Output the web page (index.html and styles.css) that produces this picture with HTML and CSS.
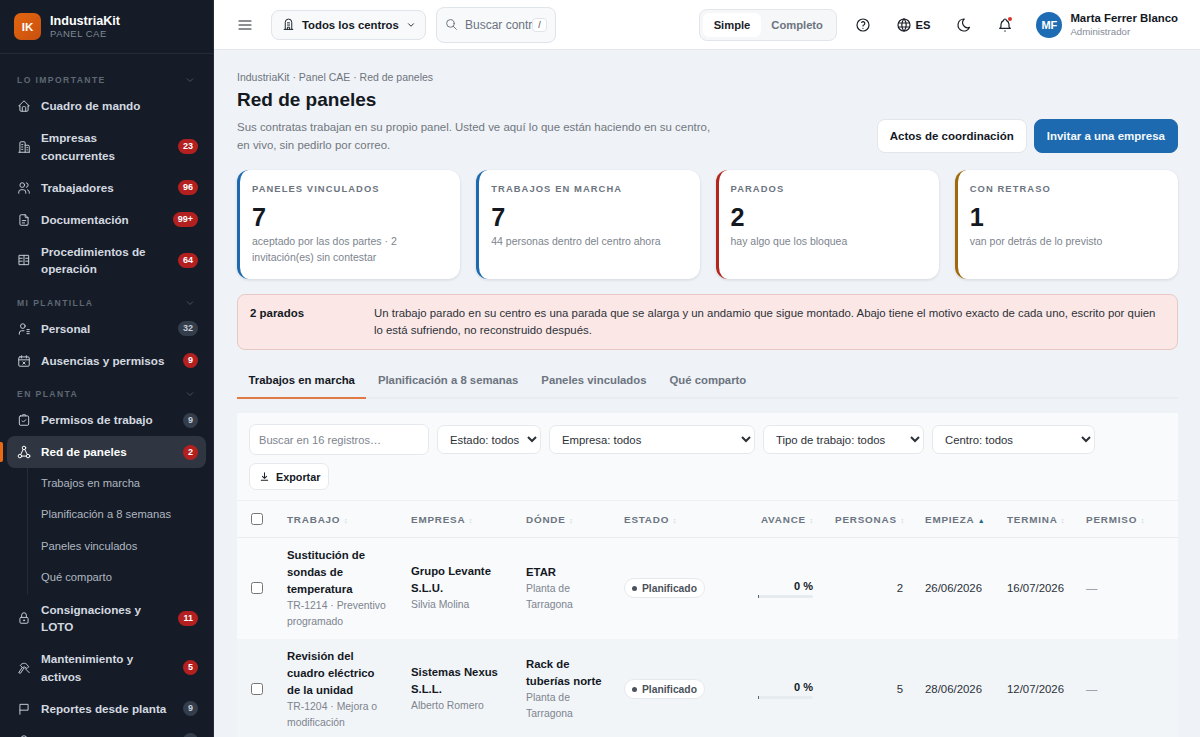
FILE: index.html
```html
<!DOCTYPE html>
<html lang="es">
<head>
    <meta charset="UTF-8">
    <meta name="viewport" content="width=device-width, initial-scale=1.0">
    <title>Red de paneles</title>
    <link rel="stylesheet" href="styles.css">
</head>
<body>
<div class="app">
    <aside class="sidebar">
        <div class="brand">
            <div class="brand-logo">IK</div>
            <div>
                <div class="brand-name">IndustriaKit</div>
                <div class="brand-sub">PANEL CAE</div>
            </div>
        </div>
        <nav class="nav">
            <div class="nav-group first">LO IMPORTANTE <svg class="chev" viewBox="0 0 24 24"><path d="M6 9l6 6 6-6"/></svg></div>
            <a class="nav-item"><svg class="ico" viewBox="0 0 24 24"><path d="M5 12H3l9-9 9 9h-2M5 12v7a2 2 0 0 0 2 2h10a2 2 0 0 0 2-2v-7"/><path d="M9 21v-6a2 2 0 0 1 2-2h2a2 2 0 0 1 2 2v6"/></svg><span class="nav-text">Cuadro de mando</span></a>
            <a class="nav-item"><svg class="ico" viewBox="0 0 24 24"><path d="M3 21h18M5 21V5a2 2 0 0 1 2-2h5a2 2 0 0 1 2 2v16M14 9h5a2 2 0 0 1 2 2v10M8 8h2M8 12h2M8 16h2M17 13h1M17 17h1"/></svg><span class="nav-text">Empresas concurrentes</span><span class="badge red">23</span></a>
            <a class="nav-item"><svg class="ico" viewBox="0 0 24 24"><circle cx="9" cy="7" r="4"/><path d="M3 21v-2a4 4 0 0 1 4-4h4a4 4 0 0 1 4 4v2M16 3.100a4 4 0 0 1 0 7.800M21 21v-2a4 4 0 0 0-3-3.900"/></svg><span class="nav-text">Trabajadores</span><span class="badge red">96</span></a>
            <a class="nav-item"><svg class="ico" viewBox="0 0 24 24"><path d="M14 3v4a1 1 0 0 0 1 1h4"/><path d="M17 21H7a2 2 0 0 1-2-2V5a2 2 0 0 1 2-2h7l5 5v11a2 2 0 0 1-2 2zM9 13h6M9 17h4"/></svg><span class="nav-text">Documentación</span><span class="badge red">99+</span></a>
            <a class="nav-item"><svg class="ico" viewBox="0 0 24 24"><path d="M4 4h16v16H4zM12 4v16M4 9h5M4 14h5M15 9h5M15 14h5"/></svg><span class="nav-text">Procedimientos de operación</span><span class="badge red">64</span></a>

            <div class="nav-group">MI PLANTILLA <svg class="chev" viewBox="0 0 24 24"><path d="M6 9l6 6 6-6"/></svg></div>
            <a class="nav-item"><svg class="ico" viewBox="0 0 24 24"><circle cx="10" cy="7" r="4"/><path d="M4 21v-2a4 4 0 0 1 4-4h4M17 13h4M17 16.500h4M17 20h4"/></svg><span class="nav-text">Personal</span><span class="badge grey">32</span></a>
            <a class="nav-item"><svg class="ico" viewBox="0 0 24 24"><rect x="3" y="5" width="18" height="16" rx="2"/><path d="M8 3v4M16 3v4M3 10h18M10 13.500l4 4M14 13.500l-4 4"/></svg><span class="nav-text">Ausencias y permisos</span><span class="badge red">9</span></a>

            <div class="nav-group">EN PLANTA <svg class="chev" viewBox="0 0 24 24"><path d="M6 9l6 6 6-6"/></svg></div>
            <a class="nav-item"><svg class="ico" viewBox="0 0 24 24"><rect x="4" y="5" width="16" height="16" rx="2"/><path d="M9 5V4a1 1 0 0 1 1-1h4a1 1 0 0 1 1 1v1M9 13.500l2 2 4-4"/></svg><span class="nav-text">Permisos de trabajo</span><span class="badge grey">9</span></a>
            <a class="nav-item active"><svg class="ico" viewBox="0 0 24 24"><circle cx="12" cy="5" r="3"/><circle cx="5" cy="19" r="3"/><circle cx="19" cy="19" r="3"/><path d="M10.600 7.700L6.400 16.300M13.400 7.700l4.200 8.600M8 19h8"/></svg><span class="nav-text">Red de paneles</span><span class="badge red">2</span></a>
            <div class="subnav">
                <a class="sub-item">Trabajos en marcha</a>
                <a class="sub-item">Planificación a 8 semanas</a>
                <a class="sub-item">Paneles vinculados</a>
                <a class="sub-item">Qué comparto</a>
            </div>
            <a class="nav-item"><svg class="ico" viewBox="0 0 24 24"><rect x="5" y="11" width="14" height="10" rx="2"/><circle cx="12" cy="16" r="1"/><path d="M8 11V7a4 4 0 0 1 8 0v4"/></svg><span class="nav-text">Consignaciones y LOTO</span><span class="badge red">11</span></a>
            <a class="nav-item"><svg class="ico" viewBox="0 0 24 24"><path d="M6 7c3-4 8-4 11-1l3 4-3 3-4-3-3 1zM9 11l-6 9 3 1 6-9M14 13l7 7"/></svg><span class="nav-text">Mantenimiento y activos</span><span class="badge red">5</span></a>
            <a class="nav-item"><svg class="ico" viewBox="0 0 24 24"><path d="M5 21V4h14v10H5"/></svg><span class="nav-text">Reportes desde planta</span><span class="badge grey">9</span></a>
            <a class="nav-item"><svg class="ico" viewBox="0 0 24 24"><circle cx="12" cy="8" r="5"/><path d="M12 13v8"/></svg><span class="nav-text">Líneas de vida</span><span class="badge grey">3</span></a>
        </nav>
    </aside>

    <div class="main">
        <header class="topbar">
            <button class="icon-btn menu-btn"><svg class="ico dark" viewBox="0 0 24 24"><path d="M3 6h18M3 12h18M3 18h18"/></svg></button>
            <button class="center-btn">
                <svg class="ico-sm" viewBox="0 0 24 24"><path d="M4 21h16M6 21V8a6 6 0 0 1 12 0v13M10 9h4M10 13h4M10 21v-4h4v4"/></svg>
                Todos los centros
                <svg class="ico-xs" viewBox="0 0 24 24"><path d="M6 9l6 6 6-6"/></svg>
            </button>
            <div class="top-search">
                <svg class="ico-sm grey-ico" viewBox="0 0 24 24"><circle cx="10" cy="10" r="7"/><path d="M21 21l-6-6"/></svg>
                <input class="top-input" type="text" placeholder="Buscar contratas">
                <kbd class="kbd">/</kbd>
            </div>
            <div class="segment">
                <span class="seg on">Simple</span>
                <span class="seg">Completo</span>
            </div>
            <button class="icon-btn help-btn"><svg class="ico dark" viewBox="0 0 24 24"><circle cx="12" cy="12" r="9"/><path d="M12 17v.01M12 13.500a1.500 1.500 0 0 1 1-1.500 2.600 2.600 0 1 0-3-4"/></svg></button>
            <button class="lang-btn"><svg class="ico dark" viewBox="0 0 24 24"><circle cx="12" cy="12" r="9"/><path d="M3.600 9h16.800M3.600 15h16.800M11.500 3a17 17 0 0 0 0 18M12.500 3a17 17 0 0 1 0 18"/></svg>ES</button>
            <button class="icon-btn moon-btn"><svg class="ico dark" viewBox="0 0 24 24"><path d="M12 3h.393a7.500 7.500 0 0 0 7.920 12.446A9 9 0 1 1 12 2.992z"/></svg></button>
            <button class="icon-btn bell-btn">
                <svg class="ico dark" viewBox="0 0 24 24"><path d="M10 5a2 2 0 1 1 4 0 7 7 0 0 1 4 6v3a4 4 0 0 0 2 3H4a4 4 0 0 0 2-3v-3a7 7 0 0 1 4-6M11.500 21h1"/></svg>
                <span class="bell-dot"></span>
            </button>
            <div class="avatar">MF</div>
            <div class="user">
                <div class="user-name">Marta Ferrer Blanco</div>
                <div class="user-role">Administrador</div>
            </div>
        </header>

        <main class="content">
            <div class="crumbs">IndustriaKit · Panel CAE · Red de paneles</div>
            <h1 class="page-title">Red de paneles</h1>
            <div class="page-head">
                <p class="page-desc">Sus contratas trabajan en su propio panel. Usted ve aquí lo que están haciendo en su centro, en vivo, sin pedirlo por correo.</p>
                <div class="page-actions">
                    <button class="btn">Actos de coordinación</button>
                    <button class="btn primary">Invitar a una empresa</button>
                </div>
            </div>

            <section class="cards">
                <div class="card blue">
                    <div class="card-label">PANELES VINCULADOS</div>
                    <div class="card-value">7</div>
                    <div class="card-note">aceptado por las dos partes · 2 invitación(es) sin contestar</div>
                </div>
                <div class="card blue">
                    <div class="card-label">TRABAJOS EN MARCHA</div>
                    <div class="card-value">7</div>
                    <div class="card-note">44 personas dentro del centro ahora</div>
                </div>
                <div class="card red-card">
                    <div class="card-label">PARADOS</div>
                    <div class="card-value">2</div>
                    <div class="card-note">hay algo que los bloquea</div>
                </div>
                <div class="card amber">
                    <div class="card-label">CON RETRASO</div>
                    <div class="card-value">1</div>
                    <div class="card-note">van por detrás de lo previsto</div>
                </div>
            </section>

            <section class="alert">
                <strong class="alert-title">2 parados</strong>
                <p class="alert-text">Un trabajo parado en su centro es una parada que se alarga y un andamio que sigue montado. Abajo tiene el motivo exacto de cada uno, escrito por quien lo está sufriendo, no reconstruido después.</p>
            </section>

            <div class="tabs">
                <a class="tab on">Trabajos en marcha</a>
                <a class="tab">Planificación a 8 semanas</a>
                <a class="tab">Paneles vinculados</a>
                <a class="tab">Qué comparto</a>
            </div>

            <section class="panel">
                <div class="filters">
                    <input class="f-search" type="text" placeholder="Buscar en 16 registros…">
                    <select class="f-select f-estado"><option>Estado: todos</option></select>
                    <select class="f-select f-empresa"><option>Empresa: todos</option></select>
                    <select class="f-select f-tipo"><option>Tipo de trabajo: todos</option></select>
                    <select class="f-select f-centro"><option>Centro: todos</option></select>
                    <button class="export"><svg class="ico-xs" viewBox="0 0 24 24"><path d="M5 20h14M12 4v12M7.500 11.500L12 16l4.500-4.500"/></svg>Exportar</button>
                </div>
                <table class="grid">
                    <colgroup>
                        <col class="c-check"><col class="c-trabajo"><col class="c-empresa"><col class="c-donde"><col class="c-estado"><col class="c-avance"><col class="c-personas"><col class="c-empieza"><col class="c-termina"><col class="c-permiso">
                    </colgroup>
                    <thead>
                        <tr>
                            <th class="check"><input type="checkbox"></th>
                            <th>TRABAJO <i>↕</i></th>
                            <th>EMPRESA <i>↕</i></th>
                            <th>DÓNDE <i>↕</i></th>
                            <th>ESTADO <i>↕</i></th>
                            <th class="right">AVANCE <i>↕</i></th>
                            <th class="right">PERSONAS <i>↕</i></th>
                            <th>EMPIEZA <b>▲</b></th>
                            <th>TERMINA <i>↕</i></th>
                            <th>PERMISO <i>↕</i></th>
                        </tr>
                    </thead>
                    <tbody>
                        <tr>
                            <td class="check"><input type="checkbox"></td>
                            <td><div class="main-line">Sustitución de sondas de temperatura</div><div class="sub-line">TR-1214 · Preventivo programado</div></td>
                            <td><div class="main-line">Grupo Levante S.L.U.</div><div class="sub-line">Silvia Molina</div></td>
                            <td><div class="main-line">ETAR</div><div class="sub-line">Planta de Tarragona</div></td>
                            <td><span class="pill"><span class="dot"></span>Planificado</span></td>
                            <td><div class="pct">0 %</div><div class="bar"><div class="bar-fill"></div></div></td>
                            <td class="right">2</td>
                            <td>26/06/2026</td>
                            <td>16/07/2026</td>
                            <td class="muted">—</td>
                        </tr>
                        <tr class="alt">
                            <td class="check"><input type="checkbox"></td>
                            <td><div class="main-line">Revisión del cuadro eléctrico de la unidad</div><div class="sub-line">TR-1204 · Mejora o modificación</div></td>
                            <td><div class="main-line">Sistemas Nexus S.L.L.</div><div class="sub-line">Alberto Romero</div></td>
                            <td><div class="main-line">Rack de tuberías norte</div><div class="sub-line">Planta de Tarragona</div></td>
                            <td><span class="pill"><span class="dot"></span>Planificado</span></td>
                            <td><div class="pct">0 %</div><div class="bar"><div class="bar-fill"></div></div></td>
                            <td class="right">5</td>
                            <td>28/06/2026</td>
                            <td>12/07/2026</td>
                            <td class="muted">—</td>
                        </tr>
                    </tbody>
                </table>
            </section>
        </main>
    </div>
</div>
</body>
</html>
```

FILE: styles.css
```css
* {
    box-sizing: border-box;
}
html, body {
    margin: 0;
    height: 100%;
    overflow: hidden;
}
body {
    font-family: "Liberation Sans", Arial, sans-serif;
    font-size: 12px;
    color: #14181f;
    background: #eff2f6;
}
button, input, select {
    font-family: inherit;
}
button {
    cursor: pointer;
    background: none;
    border: none;
    padding: 0;
    color: inherit;
}
p {
    margin: 0;
}
.app {
    display: flex;
    height: 737px;
}

/* sidebar */
.sidebar {
    width: 214px;
    flex: none;
    height: 100%;
    overflow: hidden;
    background: #151c27;
    border-right: 1px solid #262d38;
    color: #d4d9e0;
}
.brand {
    display: flex;
    align-items: center;
    gap: 9px;
    height: 54px;
    padding: 0 14px;
    border-bottom: 1px solid #252c37;
}
.brand-logo {
    width: 27px;
    height: 27px;
    border-radius: 7px;
    background: linear-gradient(135deg, #e2660f, #c9500f);
    color: #fff;
    font-weight: 700;
    font-size: 11.500px;
    display: flex;
    align-items: center;
    justify-content: center;
}
.brand-name {
    color: #fff;
    font-weight: 700;
    font-size: 12.600px;
    line-height: 14px;
}
.brand-sub {
    color: #7e8896;
    font-size: 9.500px;
    letter-spacing: 0.5px;
    line-height: 12px;
}
.nav {
    padding: 0 7px;
}
.nav-group {
    display: flex;
    justify-content: space-between;
    align-items: center;
    height: 20px;
    margin-top: 7.500px;
    padding: 0 10px;
    color: #5f6874;
    font-size: 8.600px;
    font-weight: 700;
    letter-spacing: 1.400px;
}
.nav-group.first {
    margin-top: 16px;
}
.chev {
    width: 12px;
    height: 12px;
    fill: none;
    stroke: #4a525e;
    stroke-width: 2;
}
.nav-item {
    position: relative;
    display: flex;
    align-items: center;
    gap: 10px;
    padding: 7.250px 8px 7.250px 10px;
    border-radius: 8px;
    color: #d4d9e0;
    font-weight: 700;
    font-size: 11.700px;
    line-height: 17.500px;
}
.nav-item.active {
    background: #2f3641;
    color: #fff;
}
.nav-item.active .ico {
    stroke: #fff;
}
.nav-item.active::before {
    content: "";
    position: absolute;
    left: -7px;
    top: 6px;
    bottom: 6px;
    width: 3px;
    border-radius: 0 2px 2px 0;
    background: #ea6a12;
}
.ico {
    width: 15px;
    height: 15px;
    flex: none;
    fill: none;
    stroke: #c6ccd4;
    stroke-width: 1.700;
    stroke-linecap: round;
    stroke-linejoin: round;
}
.nav-item .ico {
    width: 14px;
    height: 14px;
}
.ico.dark {
    width: 16px;
    height: 16px;
    stroke: #1c2129;
    stroke-width: 1.800;
}
.nav-text {
    flex: 1;
    min-width: 0;
}
.badge {
    flex: none;
    min-width: 15px;
    height: 15px;
    padding: 0 5px;
    border-radius: 8px;
    font-size: 9px;
    font-weight: 700;
    line-height: 15px;
    text-align: center;
    color: #fff;
}
.badge.red {
    background: #b3201f;
}
.badge.grey {
    background: #333d4b;
    color: #c8ced6;
}
.subnav {
    margin: 0 0 0 20px;
    padding-left: 13px;
    border-left: 1px solid #262d38;
}
.sub-item {
    display: block;
    height: 31.400px;
    line-height: 31.400px;
    color: #b0b7c1;
    font-size: 11.200px;
}

/* top bar */
.main {
    flex: 1;
    min-width: 0;
    height: 100%;
    overflow: hidden;
}
.topbar {
    display: flex;
    align-items: center;
    height: 50px;
    padding: 0 22px 0 23px;
    background: #fff;
    border-bottom: 1px solid #e4e8ee;
}
.icon-btn {
    display: flex;
    align-items: center;
    justify-content: center;
    position: relative;
    width: 16px;
    height: 16px;
}
.center-btn {
    display: flex;
    align-items: center;
    width: 155px;
    height: 30px;
    margin-left: 18px;
    padding: 0 10px;
    gap: 7px;
    font-size: 11.350px;
    font-weight: 700;
    white-space: nowrap;
    background: #f7f9fb;
    border: 1px solid #dfe4ea;
    border-radius: 8px;
}
.ico-sm {
    width: 13px;
    height: 13px;
    flex: none;
    fill: none;
    stroke: #1c2129;
    stroke-width: 1.800;
    stroke-linecap: round;
    stroke-linejoin: round;
}
.grey-ico {
    stroke: #6c7480;
}
.ico-xs {
    width: 12px;
    height: 12px;
    flex: none;
    fill: none;
    stroke: #1c2129;
    stroke-width: 2.200;
    stroke-linecap: round;
    stroke-linejoin: round;
}
.center-btn .ico-xs {
    width: 10px;
    height: 10px;
}
.top-search {
    display: flex;
    align-items: center;
    width: 120px;
    height: 36px;
    margin-left: 10px;
    padding: 0 8px;
    gap: 7px;
    background: #f7f9fb;
    border: 1px solid #dfe4ea;
    border-radius: 8px;
}
.top-input {
    flex: 1;
    min-width: 0;
    width: 68px;
    padding: 0;
    border: none;
    outline: none;
    background: none;
    font-size: 12px;
}
.top-input::placeholder {
    color: #6c7480;
}
.kbd {
    flex: none;
    width: 15px;
    height: 14px;
    margin-left: -7px;
    background: #fff;
    border: 1px solid #e1e5ea;
    border-radius: 4px;
    font-family: inherit;
    font-size: 9px;
    line-height: 12px;
    text-align: center;
    color: #444;
}
.segment {
    display: flex;
    align-items: center;
    height: 32px;
    margin-left: auto;
    padding: 3px;
    background: #f5f7f9;
    border: 1px solid #e2e6eb;
    border-radius: 8px;
}
.seg {
    padding: 0 10.500px;
    line-height: 24px;
    font-size: 11.200px;
    font-weight: 700;
    color: #6c7480;
    border-radius: 6px;
}
.seg.on {
    background: #fff;
    color: #1c2129;
}
.help-btn {
    margin-left: 18px;
}
.lang-btn {
    display: flex;
    align-items: center;
    gap: 3px;
    margin-left: 25px;
    font-size: 11.200px;
    font-weight: 700;
}
.moon-btn {
    margin-left: 26px;
}
.bell-btn {
    margin-left: 25px;
}
.bell-dot {
    position: absolute;
    top: 0;
    right: 1px;
    width: 4px;
    height: 4px;
    border-radius: 50%;
    background: #d9342b;
}
.avatar {
    width: 26px;
    height: 26px;
    margin-left: 23px;
    border-radius: 50%;
    background: #1e6cb3;
    color: #fff;
    font-size: 11px;
    font-weight: 700;
    line-height: 26px;
    text-align: center;
}
.user {
    margin-left: 8px;
}
.user-name {
    font-size: 11.400px;
    font-weight: 700;
    line-height: 14px;
}
.user-role {
    font-size: 9.700px;
    line-height: 13px;
    color: #858c97;
}

/* content */
.content {
    padding: 20px 22px 0 23px;
}
.crumbs {
    font-size: 10.500px;
    line-height: 14px;
    color: #6e7580;
}
.page-title {
    margin: 3px 0 0;
    font-size: 19px;
    line-height: 26px;
    font-weight: 700;
    color: #14181f;
}
.page-head {
    display: flex;
    align-items: flex-start;
    justify-content: space-between;
    margin-top: 6px;
}
.page-desc {
    width: 480px;
    font-size: 11.450px;
    line-height: 17.500px;
    color: #70777f;
}
.page-actions {
    display: flex;
    gap: 7px;
}
.btn {
    height: 34px;
    padding: 0 12px;
    border-radius: 8px;
    font-size: 11.500px;
    font-weight: 700;
    background: #fff;
    border: 1px solid #e3e7ec;
}
.btn.primary {
    background: #1d6ab0;
    border-color: #1d6ab0;
    color: #f2f7fb;
}
.cards {
    display: grid;
    grid-template-columns: repeat(4, 1fr);
    gap: 16px;
    margin-top: 16px;
}
.card {
    height: 109px;
    padding: 12px 12px;
    background: #fff;
    border-left: 3px solid #1d6ab0;
    border-radius: 12px;
    box-shadow: 0 1px 3px rgba(20, 30, 50, 0.12);
}
.card.red-card {
    border-left-color: #b3261e;
}
.card.amber {
    border-left-color: #a06a0c;
}
.card-label {
    font-size: 9.400px;
    font-weight: 700;
    letter-spacing: 1.080px;
    line-height: 13px;
    color: #6c7480;
}
.card-value {
    margin-top: 7px;
    font-size: 25.200px;
    font-weight: 700;
    line-height: 30px;
    color: #14181f;
}
.card-note {
    margin-top: 1px;
    font-size: 10.500px;
    line-height: 16px;
    color: #7d848e;
}
.alert {
    display: grid;
    grid-template-columns: 124px 1fr;
    margin-top: 15px;
    padding: 10px 12px;
    height: 56px;
    background: #fbe8e6;
    border: 1px solid #e8c8c4;
    border-radius: 8px;
}
.alert-title {
    font-size: 11.450px;
    line-height: 16.500px;
}
.alert-text {
    font-size: 11.400px;
    line-height: 16.500px;
    color: #2c3138;
}
.tabs {
    display: flex;
    margin-top: 12px;
    border-bottom: 2px solid #e9edf1;
}
.tab {
    margin-bottom: -2px;
    padding: 0 11.500px;
    height: 37px;
    line-height: 36px;
    font-size: 11.340px;
    font-weight: 700;
    color: #6c7480;
    border-bottom: 2px solid transparent;
}
.tab.on {
    color: #14181f;
    border-bottom-color: #df7a45;
}
.panel {
    margin-top: 14px;
    background: #f8fafc;
}
.filters {
    display: flex;
    flex-wrap: wrap;
    align-items: center;
    gap: 8px;
    padding: 11px 12px 10px;
}
.f-search {
    width: 180px;
    height: 31px;
    padding: 0 9px;
    background: #fff;
    border: 1px solid #e5e9ee;
    border-radius: 7px;
    font-size: 11.100px;
    outline: none;
}
.f-search::placeholder {
    color: #7d848e;
}
.f-select {
    height: 29px;
    padding: 0 0 0 8px;
    background: #fff;
    border: 1px solid #e5e9ee;
    border-radius: 7px;
    font-size: 11.340px;
    color: #2c3138;
}
.f-estado {
    width: 104px;
}
.f-empresa {
    width: 206px;
}
.f-tipo {
    width: 161px;
}
.f-centro {
    width: 163px;
}
.export {
    display: flex;
    align-items: center;
    gap: 6px;
    height: 27px;
    width: 80px;
    padding: 0 8px 0 9px;
    background: #fff;
    border: 1px solid #e5e9ee;
    border-radius: 7px;
    font-size: 10.800px;
    font-weight: 700;
}
.export .ico-xs {
    width: 11px;
    height: 11px;
}

/* table */
.grid {
    width: 100%;
    table-layout: fixed;
    border-collapse: collapse;
}
.c-check { width: 39px; }
.c-trabajo { width: 124px; }
.c-empresa { width: 115px; }
.c-donde { width: 98px; }
.c-estado { width: 134px; }
.c-avance { width: 77px; }
.c-personas { width: 90px; }
.c-empieza { width: 82px; }
.c-termina { width: 79px; }
.grid th {
    height: 37px;
    padding: 0 11px;
    border-top: 1px solid #eef1f4;
    border-bottom: 1px solid #e9edf1;
    text-align: left;
    font-size: 9.900px;
    font-weight: 700;
    letter-spacing: 0.800px;
    color: #6c7480;
    white-space: nowrap;
}
.grid th i {
    font-style: normal;
    font-weight: 400;
    font-size: 7px;
    letter-spacing: 0;
    color: #c6ccd3;
}
.grid th b {
    font-size: 7px;
    letter-spacing: 0;
    color: #1e6a86;
}
.grid th.right, .grid td.right {
    text-align: right;
}
.grid td {
    height: 101px;
    padding: 8px 11px;
    font-size: 11.400px;
    color: #2c3138;
    vertical-align: middle;
}
.grid td.muted {
    color: #8a919b;
}
.grid .alt td {
    background: #f2f5f8;
}
.grid .check {
    padding: 0 0 0 14px;
}
.grid input[type="checkbox"] {
    display: block;
    width: 12px;
    height: 12px;
    margin: 0;
}
.main-line {
    font-size: 11.340px;
    font-weight: 700;
    line-height: 17px;
    color: #14181f;
}
.sub-line {
    font-size: 10.400px;
    line-height: 16px;
    color: #7d848e;
}
.pill {
    display: inline-flex;
    align-items: center;
    gap: 5px;
    height: 20px;
    padding: 0 7px;
    background: #fff;
    border: 1px solid #e5e9ee;
    border-radius: 11px;
    font-size: 10.300px;
    font-weight: 700;
    color: #4b525c;
    white-space: nowrap;
}
.dot {
    width: 5px;
    height: 5px;
    border-radius: 50%;
    background: #4b525c;
}
.pct {
    text-align: right;
    font-size: 11px;
    font-weight: 700;
    line-height: 14px;
    color: #14181f;
}
.bar {
    height: 3px;
    margin-top: 2px;
    background: #e6ebf0;
    border-radius: 2px;
}
.bar-fill {
    width: 1px;
    height: 3px;
    background: #5d6570;
}
```
